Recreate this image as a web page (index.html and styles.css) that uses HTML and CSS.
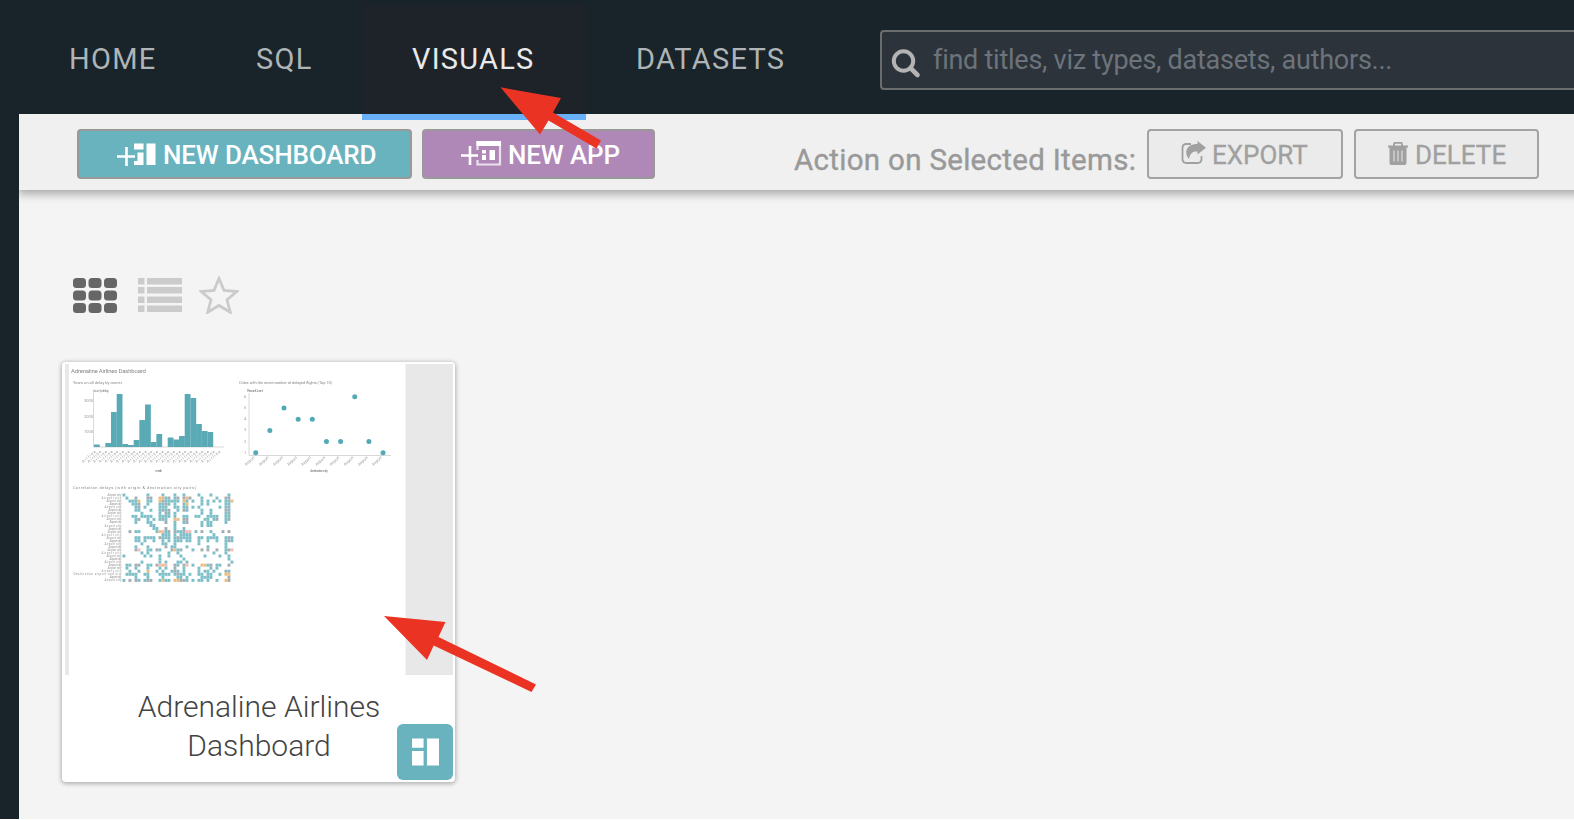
FILE: index.html
```html
<!DOCTYPE html>
<html lang="en">
<head>
<meta charset="utf-8">
<title>Visuals</title>
<link rel="stylesheet" href="styles.css">
</head>
<body>
<div class="app">
  <header class="topbar">
    <nav class="nav">
      <a class="tab tab-home">HOME</a>
      <a class="tab tab-sql">SQL</a>
      <a class="tab tab-visuals active">VISUALS</a>
      <a class="tab tab-datasets">DATASETS</a>
    </nav>
    <div class="search">
      <svg class="search-icon" viewBox="0 0 30 30"><circle cx="12.500" cy="12" r="9.7" fill="none" stroke="currentColor" stroke-width="4"/><path d="M19.500 19L26.500 26" stroke="currentColor" stroke-width="4.600" stroke-linecap="round"/></svg>
      <span class="placeholder">find titles, viz types, datasets, authors...</span>
    </div>
  </header>

  <main class="main">
    <div class="toolbar">
      <button class="btn btn-dashboard">
        <svg class="ico-dash" viewBox="0 0 40 26"><path d="M1 15.500h18M10.500 6v19" stroke="#fff" stroke-width="2.600" fill="none"/><path d="M18 2.500h9.500v6H18zM21.500 11.500h6V24h-9.500v-4h3.500zM30.500 2.500H39.500V24H30.500z" fill="#fff"/></svg><span class="label">NEW DASHBOARD</span>
      </button>
      <button class="btn btn-app">
        <svg class="ico-app" viewBox="0 0 42 26"><path d="M1 15.500h17M10 6v19" stroke="#fff" stroke-width="2.600" fill="none"/><path d="M17.500 10V2H40v22.500H17.500V20" stroke="#fff" stroke-width="2.200" stroke-opacity=".75" fill="none"/><path d="M16.500 1H41v5H16.500zM22 10h4v3.500h-4zM22 15h4v5h-4zM29.500 10H35v10h-5.500z" fill="#fff"/></svg><span class="label">NEW APP</span>
      </button>
      <span class="action-label">Action on Selected Items:</span>
      <button class="btn btn-plain btn-export">
        <svg class="ico-export" viewBox="0 0 26 24"><path d="M10 3H5.500Q1.500 3 1.500 7v11Q1.500 22 5.500 22h11Q20.500 22 20.500 18v-3" fill="none" stroke="currentColor" stroke-width="1.800"/><path d="M16.500 0L25 6.800l-8.500 6.800V10.500C11.500 10 9 12.500 8 18C3 12 4.500 3 16.500 3z" fill="currentColor"/></svg><span class="label">EXPORT</span>
      </button>
      <button class="btn btn-plain btn-delete">
        <svg class="ico-trash" viewBox="0 0 20 24"><path d="M0 4.500h20M6 4V2q0-1.200 1.200-1.200h5.600Q14 .8 14 2v2" fill="none" stroke="currentColor" stroke-width="1.800"/><path d="M1.500 5h17v16q0 2-2 2h-13q-2 0-2-2z" fill="currentColor"/><path d="M6 8.500v11M10 8.500v11M14 8.500v11" stroke="#d0d0d0" stroke-width="1.500"/></svg><span class="label">DELETE</span>
      </button>
    </div>

    <section class="content">
      <div class="views">
        <svg class="view-grid" viewBox="0 0 44 36" fill="#666"><g id="r"><rect width="13" height="10" rx="3.500"/><rect x="15.500" width="13" height="10" rx="3.500"/><rect x="31" width="13" height="10" rx="3.500"/></g><use href="#r" y="12.500"/><use href="#r" y="25"/></svg>
        <svg class="view-list" viewBox="0 0 44 36" fill="#cbcbcb"><path d="M0 1h6.500v6.500H0zM9 1h35v6.500H9zM0 10h6.500v6.500H0zM9 10h35v6.500H9zM0 19.500h6.500V26H0zM9 19.500h35V26H9zM0 28.500h6.500V35H0zM9 28.500h35V35H9z"/></svg>
        <svg class="view-star" viewBox="0 0 40 38"><path d="M20 2.500L25 14.400L37.800 15.500L28 23.800L31.300 36.300L20 29.500L8.700 36.300L12 23.800L2.200 15.500L15 14.400Z" fill="none" stroke="#cbcbcb" stroke-width="2.800"/></svg>
      </div>

      <article class="card">
        <svg class="thumb" id="thumb" viewBox="65 364 388 311">
          <rect x="65" y="364" width="4" height="311" fill="#e8e8e8"/>
          <rect x="405.500" y="364" width="47.500" height="311" fill="#e8e8e8"/>
          <g class="tiny">
            <text class="tiny-title" x="71" y="372.500" textLength="75">Adrenaline Airlines Dashboard</text>
            <text x="73" y="384.200" textLength="49">Years on all delay by carrier</text>
            <text x="93" y="392" textLength="16">(sum) delay</text>
            <text x="239" y="384.200" textLength="93">Cities with the most number of delayed flights (Top 10)</text>
            <text x="247" y="392" textLength="16">Record Count</text>
            <text x="73" y="488.500" textLength="123">Correlation delays (with origin &amp; destination city pairs)</text>
            <text x="155" y="472" textLength="7">month</text>
            <text x="310" y="472" textLength="18">destination city</text>
          </g>
          <path d="M93.500 393V447H224M249 393V455.500H391" fill="none" stroke="#d8d8d8"/>
        </svg>
        <h2 class="card-title">Adrenaline Airlines Dashboard</h2>
        <span class="badge"><svg viewBox="0 0 28 28"><path d="M0 0h12v9.500H0zM0 13h12v15H0zM15.500 0H28v28H15.500z" fill="#fff"/></svg></span>
      </article>
    </section>
  </main>

  <svg class="arrows" viewBox="0 0 1574 820" fill="#eb3323"><path d="M500.500 87.300L561 98L553 112.500L601 140.500L596.500 148.500L548.500 120.500L540 134.500Z"/><path d="M384 616L445.500 622L438.500 637L536 684.500L531.500 692L433.700 645.500L427 660Z"/></svg>
</div>
<script src="thumb.js"></script>
</body>
</html>
```
FILE: styles.css
```css
* { box-sizing: border-box; }
body { margin: 0; background: #fff; font-family: Roboto, "Liberation Sans", sans-serif; }
.app { position: relative; width: 1574px; height: 819px; overflow: hidden; background: #182429; }
.topbar { display: flex; align-items: flex-start; height: 114px; }
.nav { display: flex; padding-top: 4px; }
.tab { height: 110px; padding-top: 37px; font-size: 29px; line-height: 36px; letter-spacing: 1.25px; color: #afb4b6; white-space: nowrap; }
.tab-home { width: 237px; padding-left: 69px; }
.tab-sql { width: 125px; padding-left: 19px; }
.tab-visuals { position: relative; z-index: 2; width: 224px; height: 116px; padding-left: 50px; border-bottom: 6px solid #68b0f8; }
.tab-datasets { width: 294px; padding-left: 50px; }
.active { background: #1e2329; color: #e9eaeb; }
.search { display: flex; flex: 1; height: 60px; margin-top: 30px; padding: 0 0 0 9px; background: #2d333a; border: 2px solid #6b6c6e; border-right: 0; border-radius: 4px 0 0 4px; }
.search-icon { width: 30px; height: 30px; margin-top: 17px; color: #b4b4b4; }
.placeholder { padding: 10px 0 0 12px; font-size: 27px; line-height: 36px; letter-spacing: -.25px; color: #6c737b; white-space: nowrap; }
.main { height: 705px; margin-left: 19px; background: #f4f4f4; }
.toolbar { display: flex; align-items: flex-start; height: 76px; margin-right: -20px; padding: 15px 0 0 58px; background: #f0f0f0; box-shadow: 0 3px 9px 1px rgba(0,0,0,.32); clip-path: inset(0 0 -20px 0); }
.btn { display: flex; flex: none; align-items: flex-start; height: 50px; margin: 0; padding: 0; border: 2px solid #999; border-radius: 4px; font: 500 26px/32px Roboto, sans-serif; letter-spacing: -.15px; color: #fff; white-space: nowrap; }
.btn .label { padding-top: 8px; }
.btn svg { flex: none; }
.btn-dashboard { width: 335px; padding-left: 37px; background: #69b3bf; }
.btn-app { width: 233px; margin-left: 10px; padding-left: 36px; background: #b088b8; }
.ico-dash { width: 40px; height: 26px; margin: 10px 7px 0 0; }
.ico-app { width: 42px; height: 26px; margin: 9px 6px 0 0; }
.action-label { flex: none; width: 353px; margin-left: 139px; padding-top: 13px; font-size: 29.5px; line-height: 36px; letter-spacing: .3px; color: #999; -webkit-text-stroke: .4px #999; white-space: nowrap; }
.btn-plain { background: #ebebeb; border-color: #a3a3a3; color: #a0a0a0; font-weight: 400; letter-spacing: 0; -webkit-text-stroke: .3px #a0a0a0; }
.btn-export { width: 196px; padding-left: 32px; }
.btn-delete { width: 185px; margin-left: 11px; padding-left: 31px; }
.ico-export { width: 26px; height: 24px; margin: 10px 5px 0 0; }
.ico-trash { width: 20px; height: 24px; margin: 11px 7px 0 1px; }
.content { padding: 86px 0 0 43px; }
.views { display: flex; align-items: flex-start; height: 86px; padding-left: 11px; }
.view-grid { width: 44px; height: 36px; margin-top: 2px; }
.view-list { width: 44px; height: 36px; margin: 1px 0 0 21px; }
.view-star { width: 40px; height: 38px; margin: 0 0 0 17px; }
.card { position: relative; width: 393px; height: 420px; padding: 2px 2px 0 3px; background: #fff; border-radius: 4px; box-shadow: 0 1px 4px 1px rgba(0,0,0,.27); }
.thumb { display: block; width: 388px; height: 311px; filter: blur(.5px); }
.card-title { width: 270px; margin: 12px 0 0 59px; text-align: center; font-size: 30px; font-weight: 300; line-height: 39px; color: #444; }
.badge { position: absolute; right: 2px; bottom: 2px; display: flex; align-items: center; justify-content: center; width: 56px; height: 56px; border-radius: 6px; background: #69b3bf; }
.badge svg { width: 27px; height: 28px; }
.tiny { font-size: 4px; fill: #888; }
.tiny-title { font-size: 6px; }
.axis { font-size: 4px; fill: #999; }
.axis-row { font-size: 3px; fill: #999; }
.arrows { position: absolute; z-index: 5; left: 0; top: 0; width: 1574px; height: 820px; pointer-events: none; }
```
FILE: thumb.js
```js
const svg = document.getElementById('thumb');
const add = (tag, attrs, text) => {
  const el = document.createElementNS('http://www.w3.org/2000/svg', tag);
  for (const k in attrs) el.setAttribute(k, attrs[k]);
  if (text) el.textContent = text;
  svg.appendChild(el);
};

// Bar chart
[2.5, 0, 4, 35, 53, 3, 2, 7, 27, 42.5, 5, 13, 0, 9.5, 7.5, 11, 53, 49, 23, 16, 15].forEach((h, i) => {
  if (h) add('rect', { x: 94 + i * 5.67, y: 447 - h, width: 5.8, height: h, fill: '#5aaab6' });
});
for (let i = 0; i < 23; i++) {
  add('text', { class: 'axis', x: 0, y: 0, textLength: 17, transform: `translate(${83 + i * 5.67} 463) rotate(-40)` }, 'Airline');
}
['3000', '2000', '1000'].forEach((t, i) => add('text', { class: 'axis', x: 84, y: 402 + i * 15.5 }, t));

// Scatter plot
[1, 3, 5, 4, 4, 2, 2, 6, 2, 1].forEach((v, i) => {
  add('circle', { cx: 255.7 + i * 14.15, cy: 464 - v * 11.2, r: 2.5, fill: '#52aab7' });
  add('text', { class: 'axis', textLength: 12, transform: `translate(${246 + i * 14.15} 466) rotate(-42)` }, 'Airport');
});
for (let v = 1; v <= 6; v++) add('text', { class: 'axis', x: 244, y: 465 - v * 11.2 }, String(v));

// Heatmap
const rows = [
  't.......t....t...t..t....t...t.....t.',
  '.t..g...gg..ootg.tg.gog...t....t..gg.',
  '..ttto..tt..ogttttt.ot.t..t.t.t.t.tto',
  '...ttg..t...ttgt.t..to....t.t.....tt.',
  '....tg.t....ttt..tt.tt.t.t......t.tg.',
  '....tt...t..tgtg..t.gt....t..t....gt.',
  '......t.....t.gt.t........t..t....tg.',
  '...tt.tttt..tttt.t..tt..tt..tttt..tt.',
  '....tg..t.t.tgt..oo.gg.....tt.tg..tg.',
  '....t...tt....g..t..tg....t.tt....t..',
  '.........tt......t........t.tt.......',
  '..........tt..g..t..t................',
  '..g.tt.....tortg.gttgrr.t.g..t...g.g.',
  '.............ttt.t.tttt.......t......',
  '....tt.tttt.gttt.tgtttt..tt.tttt..tgt',
  '....tt.t..t..t.t.ttt.tt..t..t..t..tgt',
  '......t......tt..t.......t........t..',
  '....t...t.....g.tt...t......t.....t..',
  '....gr..tt.gt...gotg...t..g.g..g..tgr',
  '......t.t......t..t...........t...t..',
  't......t.t..t..t...t.......t....t..t.',
  '............t.......t..............t.',
  '......t.....t.t...tt.t..............t',
  '.tt.gg..tt.gror..gt.gr.t..ootg.tt..g.',
  '.t..t...t...t.t..g..t....t...t.t.....',
  '..t..t..o..t.t..tgt.t....t.tt.t...gt.',
  '.tttt..tt...tttt.tgtt.t..tt.tt..t.oo.',
  '....t...t....t....tt.t....tttt.....g.',
  't.g.gt.tgg..tott.ooggt.t.tt.t..t..og.'
];
const colors = { t: '#7dbfc8', g: '#a5adb4', o: '#edbd80', r: '#f3bbb4' };
rows.forEach((row, y) => {
  [...row].forEach((c, x) => {
    if (c !== '.') add('rect', { x: 122.5 + x * 3, y: 493.5 + y * 3.05, width: 2.9, height: 3, fill: colors[c] });
  });
  const label = y === 26 ? 'Destination airport and city' : 'Airport city';
  const len = y === 26 ? 48 : [14, 20, 15, 12, 17, 13][y % 6];
  add('text', { class: 'axis-row', x: 121.5 - len, y: 496 + y * 3.05, textLength: len }, label);
});
```
